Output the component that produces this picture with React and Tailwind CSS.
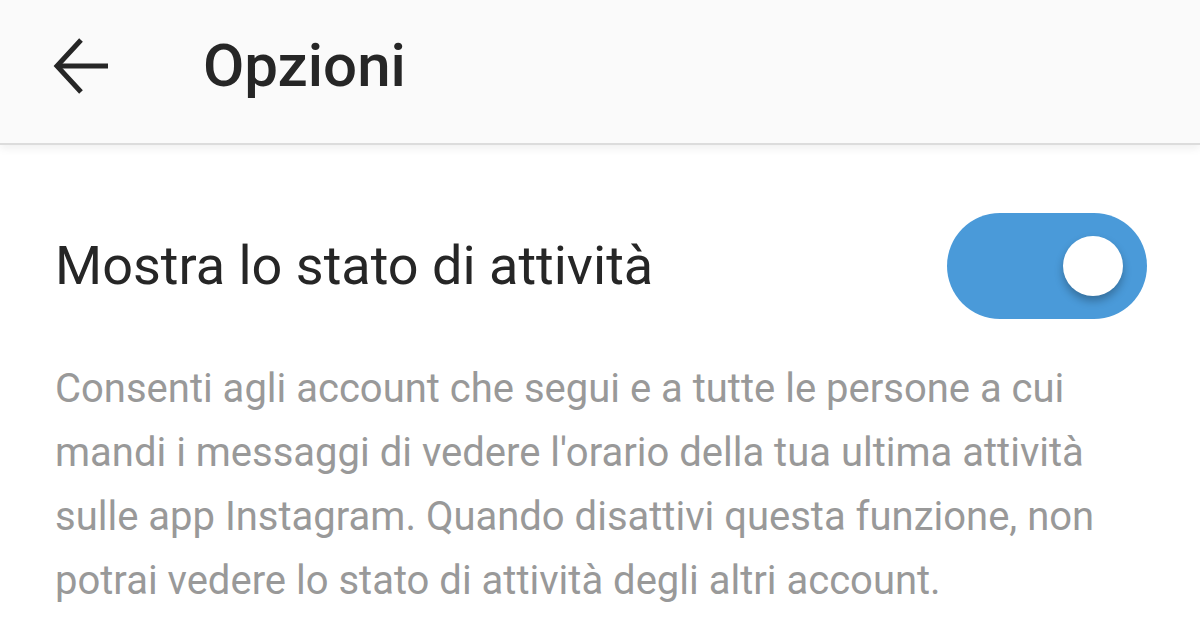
import React, { useState } from 'react';

export default function App() {
  const [active, setActive] = useState(true);

  return (
    <div className="min-h-screen bg-white" style={{ fontFamily: 'Roboto, "Noto Sans", sans-serif' }}>
      <header className="h-[145px] pb-[12px] bg-[#fafafa] border-b-2 border-[#dcdcdc] shadow-[0_4px_8px_rgba(0,0,0,0.06)] flex items-center">
        <button className="ml-[52px] w-[58px] h-[58px] flex items-center justify-center text-[#262626]">
          <svg width="58" height="58" viewBox="0 0 58 58" fill="none" stroke="currentColor" strokeWidth="5" strokeLinecap="butt">
            <path d="M56 29 H6" />
            <path d="M29 3 L5 29 L29 55" />
          </svg>
        </button>
        <h1 className="ml-[93px] text-[60px] font-medium text-[#262626] leading-none">Opzioni</h1>
      </header>

      <div className="px-[55px] pt-[68px]">
        <div className="flex items-center justify-between">
          <span className="text-[54px] text-[#262626] leading-none">Mostra lo stato di attività</span>
          <button
            onClick={() => setActive(!active)}
            className="mr-[-2px] w-[200px] h-[106px] rounded-full bg-[#4a9ad9] flex items-center justify-end pr-[24px]"
          >
            <span className="w-[60px] h-[60px] rounded-full bg-white shadow-[0_5px_8px_rgba(0,0,0,0.28)]" />
          </button>
        </div>
        <p className="mt-[38px] text-[40px] leading-[64px] text-[#999999]">
          Consenti agli account che segui e a tutte le persone a cui mandi i messaggi di vedere l'orario della tua ultima attività sulle app Instagram. Quando disattivi questa funzione, non potrai vedere lo stato di attività degli altri account.
        </p>
      </div>
    </div>
  );
}
